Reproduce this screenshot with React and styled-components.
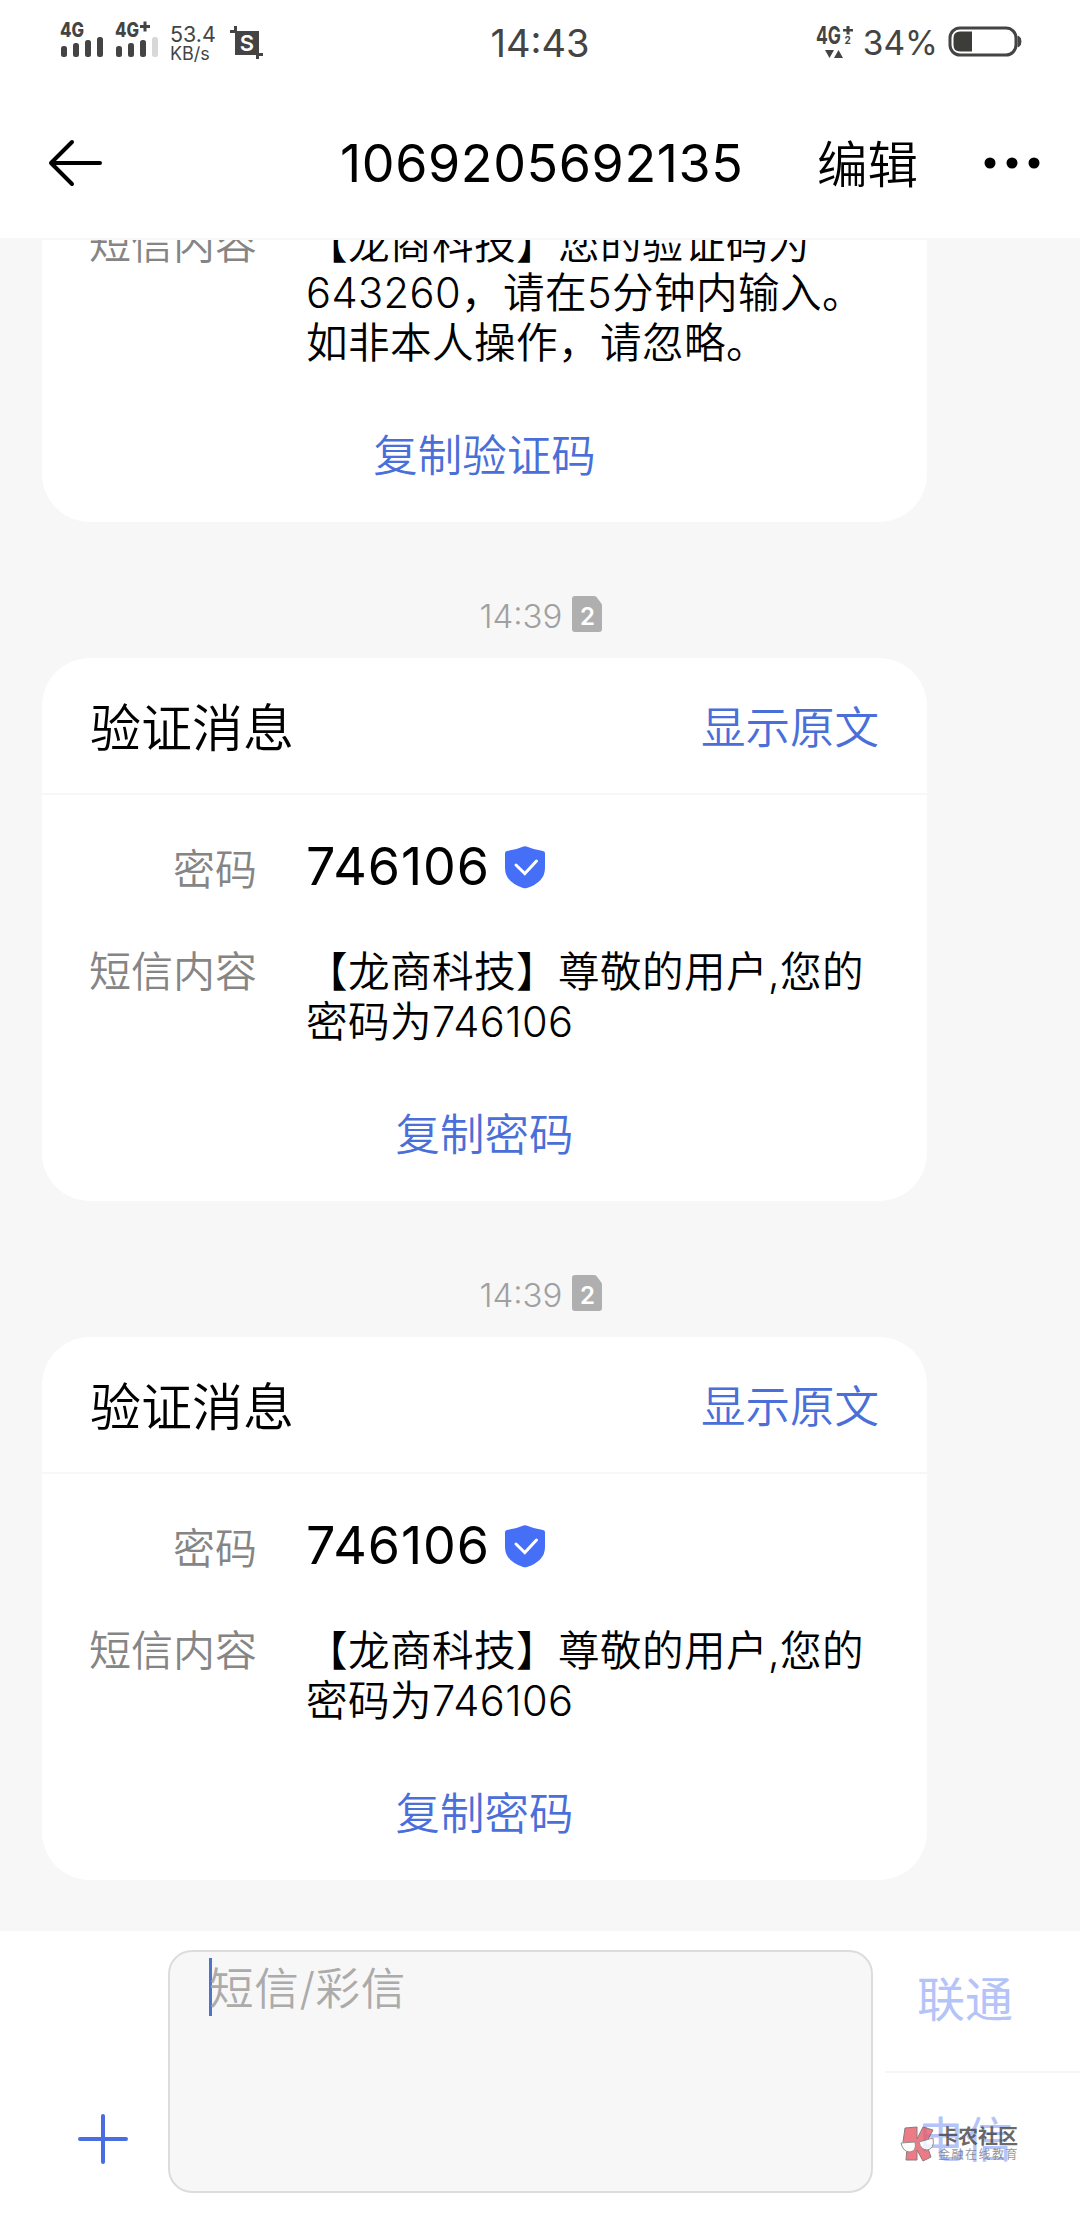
import styled, { createGlobalStyle } from "styled-components";

const messages = [
  {
    id: 1,
    label: "验证码",
    code: "643260",
    lines: ["【龙商科技】您的验证码为", "643260，请在5分钟内输入。", "如非本人操作，请忽略。"],
    action: "复制验证码",
  },
  {
    id: 2,
    time: "14:39",
    label: "密码",
    code: "746106",
    lines: ["【龙商科技】尊敬的用户,您的", "密码为746106"],
    action: "复制密码",
  },
  {
    id: 3,
    time: "14:39",
    label: "密码",
    code: "746106",
    lines: ["【龙商科技】尊敬的用户,您的", "密码为746106"],
    action: "复制密码",
  },
];

const Signal = ({ label, weak }) => (
  <svg width="46" height="40" viewBox="0 0 46 40" fill="#444">
    <text x="0" y="16" fontSize="20" fontWeight="800" textLength="24" lengthAdjust="spacingAndGlyphs">
      {label}
    </text>
    {weak && <path d="M25 4h3.500v-3.500h3v3.500h3.500v3h-3.500v3.500h-3v-3.500h-3.500z" />}
    <rect x="1" y="25" width="6" height="11" rx="2.5" />
    <rect x="13" y="22" width="6" height="14" rx="2.5" />
    <rect x="25" y="19" width="6" height="17" rx="2.5" />
    <rect x="37" y="16" width="6" height="20" rx="2.5" fill={weak ? "#d8d8d8" : "#444"} />
  </svg>
);

const Screenshot = () => (
  <svg width="34" height="34" viewBox="0 0 34 34">
    <path d="M5 5h24v24H5zM0 4h6v3H0zM4 0h3v6H4zM28 27h5v3h-5zM26 28h3v5h-3z" fill="#444" />
    <text x="17" y="25" fontSize="22" fontWeight="600" fill="#fff" textAnchor="middle">
      S
    </text>
  </svg>
);

const DataNetwork = () => (
  <svg width="38" height="36" viewBox="0 0 38 36" fill="#444">
    <text x="0" y="18" fontSize="24" fontWeight="700" textLength="25" lengthAdjust="spacingAndGlyphs">
      4G
    </text>
    <path d="M27 3h3.500v-3h3v3h3.500v2.600h-3.500v3h-3v-3h-3.500z" />
    <text x="28.500" y="18" fontSize="10" fontWeight="700">
      2
    </text>
    <path d="M9 24h9l-4.500 8zM18 32h9l-4.500-8z" />
  </svg>
);

const Battery = () => (
  <svg width="74" height="32" viewBox="0 0 74 32">
    <rect x="2" y="2" width="66" height="27" rx="10" fill="none" stroke="#444" strokeWidth="3" />
    <path d="M24 5.500H12q-6.500 0-6.500 6.500v7q0 6.500 6.500 6.500h12z" fill="#3c3c38" />
    <path d="M70 10q3 1 3 5.500t-3 5.500z" fill="#444" stroke="#444" strokeWidth="1" />
  </svg>
);

const Shield = () => (
  <svg width="42" height="44" viewBox="0 0 42 44">
    <path
      d="M19.500 1.500q1.500-.6 3 0Q30 4.800 39 6q2 .3 2 2.200V23Q41 37 23 43q-2 .6-4 0Q1 37 1 23V8.200Q1 6.300 3 6q9-1.200 16.500-4.500z"
      fill="#466ff7"
    />
    <path
      d="M12 20l8.800 8.500L32.500 16"
      fill="none"
      stroke="#fff"
      strokeWidth="3"
      strokeLinecap="round"
    />
  </svg>
);

const Sim = () => (
  <svg width="30" height="36" viewBox="0 0 30 36">
    <path d="M3 0h19q1.500 0 2.500 1l4.500 6q1 1 1 2.500V33q0 3-3 3H3q-3 0-3-3V3q0-3 3-3z" fill="#afafaf" />
    <text x="15.500" y="29" fontSize="24" fontWeight="600" fill="#fff" textAnchor="middle">
      2
    </text>
  </svg>
);

const WatermarkLogo = () => (
  <svg width="35" height="36" viewBox="0 0 35 36">
    <path
      d="M5 2l12-1v12l6-12 10 3-7 13 5 14-8 4-6-11v10H6l1-12-4-6z"
      fill="#e85b69"
      stroke="#70595f"
      strokeWidth="1"
    />
    <path d="M1 17l14-1q2 9-5 10-7 0-9-9zM19 16l14-4q2 11-6 12-6 0-8-8z" fill="#fff" stroke="#777" />
  </svg>
);

const Message = ({ time, label, code, lines, action }) => (
  <>
    {time && (
      <TimeRow>
        {time}
        <Sim />
      </TimeRow>
    )}
    <Card>
      <CardHeader>
        <CardTitle>验证消息</CardTitle>
        <Original>显示原文</Original>
      </CardHeader>
      <Field gap={50}>
        <Label low>{label}</Label>
        <Code>{code}</Code>
        <Shield />
      </Field>
      <Field gap={64}>
        <Label>短信内容</Label>
        <Content>
          {lines.map((line) => (
            <p key={line}>{line}</p>
          ))}
        </Content>
      </Field>
      <CopyButton>{action}</CopyButton>
    </Card>
  </>
);

const App = () => {
  return (
    <Screen>
      <GlobalStyle />
      <StatusBar>
        <StatusLeft>
          <Signal label="4G" />
          <Signal label="4G" weak />
          <Speed>
            <span>53.4</span>
            <small>KB/s</small>
          </Speed>
          <Screenshot />
        </StatusLeft>
        <Clock>14:43</Clock>
        <StatusRight>
          <DataNetwork />
          <Percent>34%</Percent>
          <Battery />
        </StatusRight>
      </StatusBar>
      <Header>
        <svg width="54" height="50" viewBox="0 0 54 50" fill="none" stroke="#000" strokeWidth="4" strokeLinecap="round" strokeLinejoin="round">
          <path d="M24 4L3 25l21 21M3 25h49" />
        </svg>
        <Title>1069205692135</Title>
        <Edit>编辑</Edit>
        <svg width="58" height="14" viewBox="0 0 58 14">
          <circle cx="7" cy="7" r="5.500" />
          <circle cx="29" cy="7" r="5.500" />
          <circle cx="51" cy="7" r="5.500" />
        </svg>
      </Header>
      <Thread>
        {messages.map((message) => (
          <Message key={message.id} {...message} />
        ))}
      </Thread>
      <Composer>
        <AddButton>
          <svg width="52" height="52" viewBox="0 0 52 52" stroke="#4a6de2" strokeWidth="4" strokeLinecap="round">
            <path d="M3 26h46M26 3v46" />
          </svg>
        </AddButton>
        <Input>
          <Caret />
          <Placeholder>短信/彩信</Placeholder>
        </Input>
        <SendColumn>
          <Send>联通</Send>
          <Send last>电信</Send>
        </SendColumn>
        <Watermark>
          <WatermarkLogo />
          <WatermarkText>
            <strong>卡农社区</strong>
            <span>金融在线教育</span>
          </WatermarkText>
        </Watermark>
      </Composer>
    </Screen>
  );
};

export default App;

const GlobalStyle = createGlobalStyle`
  * {
    box-sizing: border-box;
  }
  body {
    margin: 0;
    font-family: Inter, "Noto Sans CJK SC", sans-serif;
    font-weight: 350;
    color: #000;
  }
  p {
    margin: 0;
  }
  svg {
    display: block;
    flex-shrink: 0;
    overflow: visible;
  }
`;

const Screen = styled.div`
  width: 1080px;
  height: 2214px;
  display: flex;
  flex-direction: column;
  overflow: hidden;
  background: #f7f7f7;
  white-space: nowrap;
`;

const StatusBar = styled.div`
  height: 88px;
  flex-shrink: 0;
  display: grid;
  grid-template-columns: 1fr auto 1fr;
  background: #fff;
  color: #444;
`;

const StatusLeft = styled.div`
  display: flex;
  align-items: flex-start;
  gap: 9px;
  padding: 21px 0 0 60px;

  > svg:last-child {
    margin: 5px 0 0 5px;
  }
`;

const Speed = styled.div`
  width: 46px;
  display: flex;
  flex-direction: column;
  font-size: 21.500px;
  font-weight: 400;
  line-height: 20px;
  padding-top: 3px;

  small {
    font-size: 18px;
  }
`;

const Clock = styled.div`
  font-size: 38px;
  line-height: 87px;
  font-weight: 400;
`;

const StatusRight = styled.div`
  display: flex;
  align-items: flex-start;
  justify-content: flex-end;
  padding: 26px 58px 0 0;
`;

const Percent = styled.div`
  font-size: 33.500px;
  line-height: 35px;
  font-weight: 400;
  margin: 0 10px 0 9px;
`;

const Header = styled.header`
  height: 152px;
  flex-shrink: 0;
  display: flex;
  align-items: center;
  background: #fff;
  border-bottom: 2px solid #f7f7f7;
  padding: 0 39px 0 48px;
`;

const Title = styled.h1`
  width: 402px;
  margin: 0 0 0 238px;
  font-size: 52px;
  font-weight: 400;
  letter-spacing: 0.600px;
`;

const Edit = styled.div`
  margin: 0 auto 4px 75px;
  font-size: 50.500px;
`;

const Thread = styled.main`
  flex: 1;
  min-height: 0;
  display: flex;
  flex-direction: column;
  justify-content: flex-end;
  overflow: hidden;
  padding: 0 0 51px 42px;
`;

const TimeRow = styled.div`
  width: 998px;
  height: 136px;
  flex-shrink: 0;
  display: flex;
  justify-content: center;
  align-items: flex-start;
  gap: 10px;
  padding-top: 74px;
  font-size: 33px;
  font-weight: 300;
  line-height: 40px;
  color: #a0a0a0;
`;

const Card = styled.section`
  width: 885px;
  flex-shrink: 0;
  border-radius: 48px;
  background: #fff;
  padding-bottom: 41px;
`;

const CardHeader = styled.div`
  height: 137px;
  display: flex;
  align-items: center;
  justify-content: space-between;
  border-bottom: 2px solid #f7f7f7;
  padding: 0 48px 2px;
  margin-bottom: 47px;
`;

const CardTitle = styled.h2`
  margin: 0;
  font-size: 51px;
  font-weight: 350;
`;

const Original = styled.div`
  font-size: 44.500px;
  color: #4a6fd9;
`;

const Field = styled.div`
  display: flex;
  line-height: 50px;
  margin-bottom: ${(props) => props.gap}px;

  > svg {
    margin-top: 3px;
  }
`;

const Label = styled.div`
  width: 215px;
  text-align: right;
  font-size: 42px;
  color: #858585;
  margin-right: 49px;
  padding-top: ${(props) => (props.low ? "3px" : "2px")};
`;

const Code = styled.div`
  width: 183px;
  margin-right: 15px;
  font-size: 52px;
  font-weight: 400;
  letter-spacing: 0.900px;
`;

const Content = styled.div`
  font-size: 41.600px;
  line-height: 49.500px;
  letter-spacing: 0.400px;
  padding-top: 3px;
  margin-bottom: -1px;
`;

const CopyButton = styled.div`
  text-align: center;
  font-size: 44.500px;
  line-height: 50px;
  color: #4a6fd9;
`;

const Composer = styled.footer`
  position: relative;
  height: 283px;
  flex-shrink: 0;
  display: flex;
  background: #fff;
`;

const AddButton = styled.div`
  width: 168px;
  padding: 182px 0 0 77px;
`;

const Input = styled.div`
  width: 705px;
  height: 243px;
  margin-top: 19px;
  display: flex;
  align-items: flex-start;
  border: 2px solid #dcdcdc;
  border-radius: 24px;
  background: #f7f7f7;
  padding: 6px 39px;
`;

const Caret = styled.div`
  width: 3px;
  height: 58px;
  margin-right: -3px;
  background: #4f73c8;
`;

const Placeholder = styled.div`
  font-size: 44.500px;
  line-height: 62px;
  letter-spacing: 0.700px;
  color: #ababab;
`;

const SendColumn = styled.div`
  flex: 1;
  margin-left: 12px;
`;

const Send = styled.div`
  height: ${(props) => (props.last ? "140px" : "142px")};
  border-bottom: ${(props) => (props.last ? "none" : "2px solid #f5f5f5")};
  padding-left: 32px;
  font-size: 48px;
  font-weight: 400;
  line-height: ${(props) => (props.last ? "134px" : "138px")};
  color: #b4c3f8;
`;

/* sits over the second send button */
const Watermark = styled.div`
  position: absolute;
  left: 900px;
  top: 195px;
  display: flex;
  gap: 3px;
  opacity: 0.8;
`;

const WatermarkText = styled.div`
  display: flex;
  flex-direction: column;
  color: #444;

  strong {
    font-size: 20px;
    line-height: 22px;
    font-weight: 700;
  }

  span {
    font-size: 12px;
    letter-spacing: 1.500px;
    line-height: 14px;
    color: #777;
  }
`;
